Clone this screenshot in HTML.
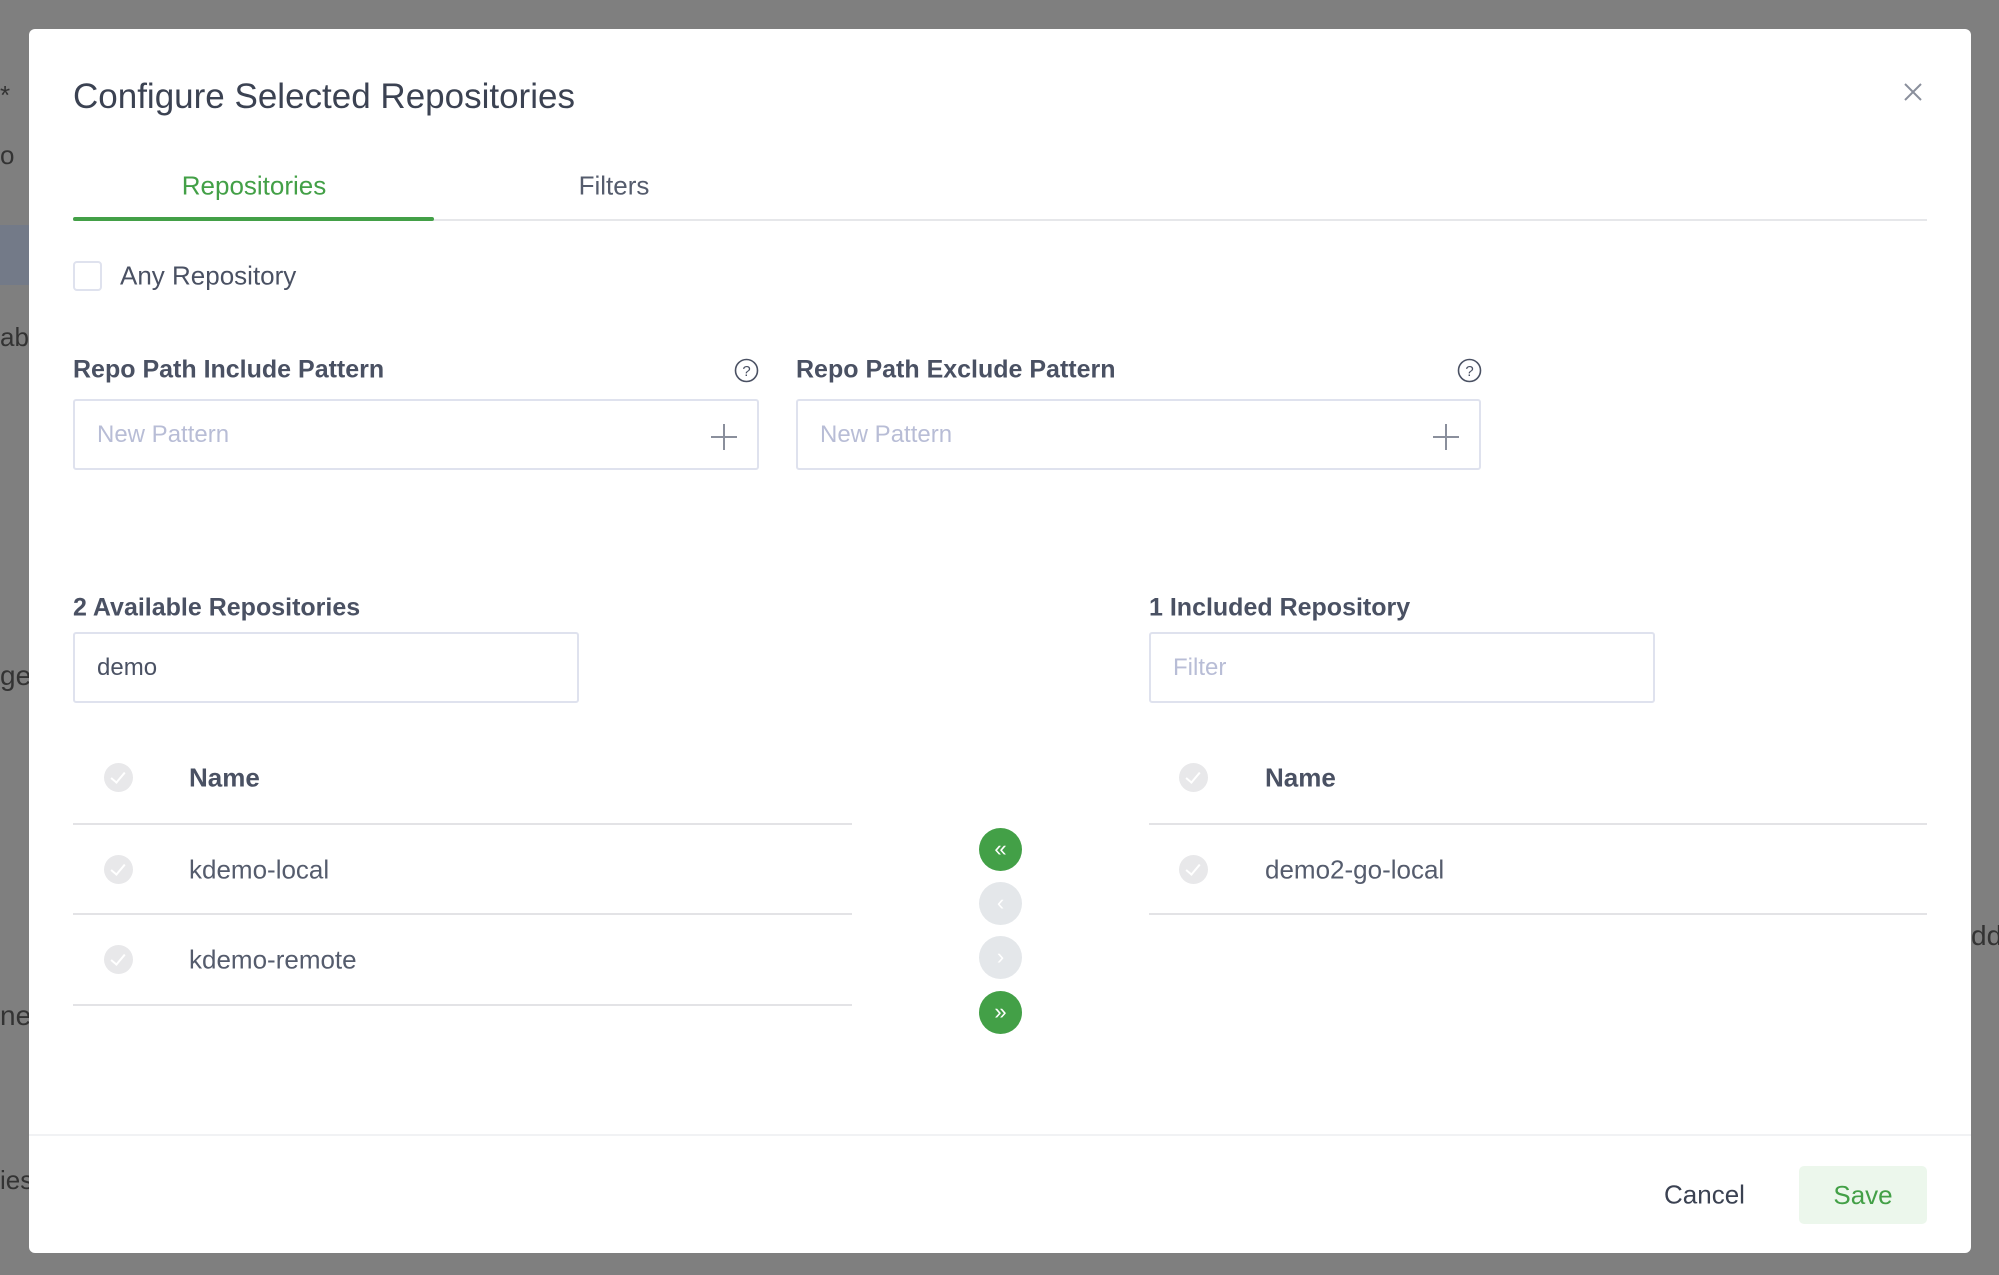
<!DOCTYPE html>
<html><head><meta charset="utf-8"><style>
*{margin:0;padding:0;box-sizing:border-box}
body{width:1999px;height:1275px;background:#7f7f7f;position:relative;overflow:hidden;font-family:"Liberation Sans",sans-serif;color:#3e4556}
.a{position:absolute;white-space:nowrap}
.modal{position:absolute;left:29px;top:29px;width:1942px;height:1224px;background:#fff;border-radius:6px}
.lbl{font-size:25px;font-weight:bold;color:#4a5163;transform:translateY(-50%)}
.inp{position:absolute;border:2px solid #dfe2ee;border-radius:3px;background:#fff}
.ph{font-size:24px;color:#b8bdd6;position:absolute;left:22px;top:50%;transform:translateY(-50%)}
.ck{position:absolute;width:29px;height:29px;border-radius:50%;background:#e8e8ea}
.ck:after{content:"";position:absolute;left:10px;top:6px;width:6px;height:12px;border:solid #fff;border-width:0 2px 2px 0;transform:rotate(40deg)}
.line{position:absolute;height:2px;background:#e3e3e6}
.txt{font-size:26px;color:#555c6d;transform:translateY(-50%)}
.btn{position:absolute;width:43px;height:43px;border-radius:50%;color:#fff;font-size:22px;text-align:center;line-height:41px}
</style></head><body>
<div class="a" style="left:0;top:80px;font-size:26px;color:#333">*</div>
<div class="a" style="left:0;top:140px;font-size:26px;color:#333">o</div>
<div class="a" style="left:0;top:225px;width:29px;height:60px;background:#737a88"></div>
<div class="a" style="left:0;top:322px;font-size:26px;color:#333">ab</div>
<div class="a" style="left:0;top:660px;font-size:28px;color:#333">ge</div>
<div class="a" style="left:0;top:1000px;font-size:28px;color:#333">ne</div>
<div class="a" style="left:0;top:1165px;font-size:26px;color:#333">ies</div>
<div class="a" style="left:1971px;top:920px;font-size:28px;color:#333">dd</div>
<div class="modal"></div>
<div class="a" style="left:73px;top:97px;font-size:35px;transform:translateY(-50%);color:#3b4252">Configure Selected Repositories</div>
<svg class="a" style="left:1903px;top:82px" width="20" height="20"><path d="M2 2L18 18M18 2L2 18" stroke="#8a8f9c" stroke-width="2"/></svg>
<div class="a" style="left:73px;top:219px;width:1854px;height:2px;background:#e6e7ea"></div>
<div class="a" style="left:73px;top:217px;width:361px;height:4px;background:#43a047;border-radius:2px"></div>
<div class="a" style="left:254px;top:186px;font-size:26px;color:#43a047;transform:translate(-50%,-50%)">Repositories</div>
<div class="a" style="left:614px;top:186px;font-size:26px;color:#555c6d;transform:translate(-50%,-50%)">Filters</div>
<div class="a" style="left:73px;top:261px;width:29px;height:30px;border:2px solid #dfe2ee;border-radius:4px"></div>
<div class="a txt" style="left:120px;top:276px;color:#4a5163">Any Repository</div>
<div class="a lbl" style="left:73px;top:370px">Repo Path Include Pattern</div>
<div class="a lbl" style="left:796px;top:370px">Repo Path Exclude Pattern</div>
<svg class="a" style="left:734px;top:358px" width="25" height="25"><circle cx="12.5" cy="12.5" r="11" fill="none" stroke="#4a5163" stroke-width="1.6"/><text x="12.5" y="18" font-size="15" text-anchor="middle" fill="#4a5163" font-family="Liberation Sans">?</text></svg>
<svg class="a" style="left:1457px;top:358px" width="25" height="25"><circle cx="12.5" cy="12.5" r="11" fill="none" stroke="#4a5163" stroke-width="1.6"/><text x="12.5" y="18" font-size="15" text-anchor="middle" fill="#4a5163" font-family="Liberation Sans">?</text></svg>
<div class="inp" style="left:73px;top:399px;width:686px;height:71px"><span class="ph">New Pattern</span><svg style="position:absolute;right:20px;top:23px" width="26" height="26"><path d="M13 0V26M0 13H26" stroke="#8a8f9c" stroke-width="2"/></svg></div>
<div class="inp" style="left:796px;top:399px;width:685px;height:71px"><span class="ph">New Pattern</span><svg style="position:absolute;right:20px;top:23px" width="26" height="26"><path d="M13 0V26M0 13H26" stroke="#8a8f9c" stroke-width="2"/></svg></div>
<div class="a lbl" style="left:73px;top:608px">2 Available Repositories</div>
<div class="a lbl" style="left:1149px;top:608px">1 Included Repository</div>
<div class="inp" style="left:73px;top:632px;width:506px;height:71px"><span class="ph" style="color:#4a5163">demo</span></div>
<div class="inp" style="left:1149px;top:632px;width:506px;height:71px"><span class="ph">Filter</span></div>
<div class="ck" style="left:104px;top:763px"></div>
<div class="a txt" style="left:189px;top:778px;font-weight:bold;color:#4a5163">Name</div>
<div class="line" style="left:73px;top:823px;width:779px"></div>
<div class="ck" style="left:104px;top:855px"></div>
<div class="a txt" style="left:189px;top:870px">kdemo-local</div>
<div class="line" style="left:73px;top:913px;width:779px"></div>
<div class="ck" style="left:104px;top:945px"></div>
<div class="a txt" style="left:189px;top:960px">kdemo-remote</div>
<div class="line" style="left:73px;top:1004px;width:779px"></div>
<div class="ck" style="left:1179px;top:763px"></div>
<div class="a txt" style="left:1265px;top:778px;font-weight:bold;color:#4a5163">Name</div>
<div class="line" style="left:1149px;top:823px;width:778px"></div>
<div class="ck" style="left:1179px;top:855px"></div>
<div class="a txt" style="left:1265px;top:870px">demo2-go-local</div>
<div class="line" style="left:1149px;top:913px;width:778px"></div>
<div class="btn" style="left:979px;top:828px;background:#43a047">«</div>
<div class="btn" style="left:979px;top:882px;background:#e4e7ea">‹</div>
<div class="btn" style="left:979px;top:936px;background:#e4e7ea">›</div>
<div class="btn" style="left:979px;top:991px;background:#43a047">»</div>
<div class="a" style="left:29px;top:1134px;width:1942px;height:2px;background:#f1f2f4"></div>
<div class="a txt" style="left:1664px;top:1195px;color:#3b4252">Cancel</div>
<div class="a" style="left:1799px;top:1166px;width:128px;height:58px;background:#ecf7ec;border-radius:5px;color:#43a047;font-size:26px;text-align:center;line-height:58px">Save</div>
</body></html>
